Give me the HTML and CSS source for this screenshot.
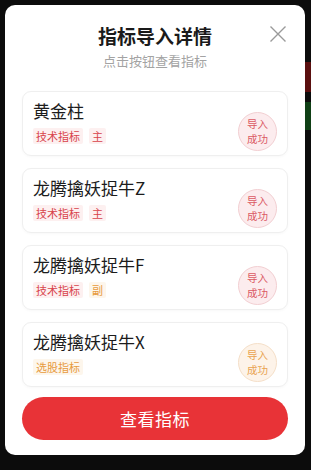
FILE: index.html
```html
<!DOCTYPE html>
<html lang="zh">
<head>
<meta charset="utf-8">
<title>指标导入详情</title>
<link rel="stylesheet" href="styles.css">
</head>
<body>
<div class="backdrop">
  <span class="bg-red"></span>
  <span class="bg-green"></span>
</div>
<div class="modal">
  <button class="close" aria-label="关闭">
    <svg width="16" height="16" viewBox="0 0 16 16"><path d="M0.5 0.5 L15.5 15.5 M15.5 0.5 L0.5 15.5" stroke="#9a9a9a" stroke-width="1.4" fill="none"/></svg>
  </button>
  <h1 class="title">指标导入详情</h1>
  <p class="subtitle">点击按钮查看指标</p>
  <div class="list">
    <div class="card">
      <div class="info">
        <div class="name">黄金柱</div>
        <div class="tags"><span class="tag red">技术指标</span><span class="tag red">主</span></div>
      </div>
      <div class="stamp red"><span>导入</span><span>成功</span></div>
    </div>
    <div class="card">
      <div class="info">
        <div class="name">龙腾擒妖捉牛Z</div>
        <div class="tags"><span class="tag red">技术指标</span><span class="tag red">主</span></div>
      </div>
      <div class="stamp red"><span>导入</span><span>成功</span></div>
    </div>
    <div class="card">
      <div class="info">
        <div class="name">龙腾擒妖捉牛F</div>
        <div class="tags"><span class="tag red">技术指标</span><span class="tag orange">副</span></div>
      </div>
      <div class="stamp red"><span>导入</span><span>成功</span></div>
    </div>
    <div class="card">
      <div class="info">
        <div class="name">龙腾擒妖捉牛X</div>
        <div class="tags"><span class="tag orange">选股指标</span></div>
      </div>
      <div class="stamp orange"><span>导入</span><span>成功</span></div>
    </div>
  </div>
  <button class="primary">查看指标</button>
</div>
</body>
</html>
```
FILE: styles.css
```css
* { box-sizing: border-box; }
html, body {
  margin: 0;
  padding: 0;
}
body {
  width: 311px;
  height: 470px;
  background: #0c0c0c;
  font-family: "Noto Sans CJK SC", "Noto Sans", sans-serif;
  overflow: hidden;
  position: relative;
}
.backdrop {
  position: absolute;
  inset: 0;
}
.bg-red {
  position: absolute;
  right: 0;
  top: 62px;
  width: 8px;
  height: 30px;
  background: #5a0f0f;
}
.bg-green {
  position: absolute;
  right: 0;
  top: 102px;
  width: 8px;
  height: 28px;
  background: #0f3f15;
}
.modal {
  position: relative;
  margin: 5px 6px 0 5px;
  width: 300px;
  height: 450px;
  background: #fff;
  border-radius: 10px;
  padding: 18px 17px 14px;
  display: flex;
  flex-direction: column;
}
.close {
  position: absolute;
  top: 21px;
  right: 19px;
  width: 16px;
  height: 16px;
  padding: 0;
  border: 0;
  background: none;
  display: block;
}
.close svg { display: block; }
.title {
  margin: 0;
  font-size: 19px;
  line-height: 26px;
  font-weight: 700;
  color: #1a1a1a;
  text-align: center;
}
.subtitle {
  margin: 3px 0 0;
  font-size: 13px;
  line-height: 18px;
  color: #a3a3a3;
  text-align: center;
}
.list {
  margin-top: 21px;
  display: flex;
  flex-direction: column;
  gap: 12px;
}
.card {
  height: 65px;
  border: 1px solid #efefef;
  border-radius: 9px;
  box-shadow: 0 1px 3px rgba(0,0,0,0.03);
  padding: 7px 10px 0 10px;
  display: flex;
  justify-content: space-between;
}
.name {
  font-size: 17px;
  line-height: 24px;
  color: #1c1c1c;
}
.tags {
  margin-top: 5px;
  display: flex;
  gap: 6px;
}
.tag {
  font-size: 11px;
  line-height: 16px;
  padding: 0 3px;
  border-radius: 2px;
}
.tag.red { color: #d8434b; background: #fdf0f0; }
.tag.orange { color: #e79a3c; background: #fdf6ec; }
.stamp {
  align-self: flex-end;
  margin-bottom: 4px;
  width: 39px;
  height: 39px;
  border-radius: 50%;
  font-size: 10.5px;
  text-align: center;
  display: flex;
  flex-direction: column;
  align-items: center;
  justify-content: center;
  padding-bottom: 1px;
}
.stamp span {
  display: block;
  line-height: 15.5px;
  height: 15.5px;
}
.stamp.red { color: #db5a64; background: #fcecee; border: 1px solid #f2cfd2; }
.stamp.orange { color: #e9a350; background: #fdf3e9; border: 1px solid #f5dfc8; }
.primary {
  margin-top: 10px;
  height: 43px;
  border: 0;
  border-radius: 22px;
  background: #e83337;
  color: #fff;
  font-family: inherit;
  font-size: 17px;
  letter-spacing: 0.5px;
}
```
